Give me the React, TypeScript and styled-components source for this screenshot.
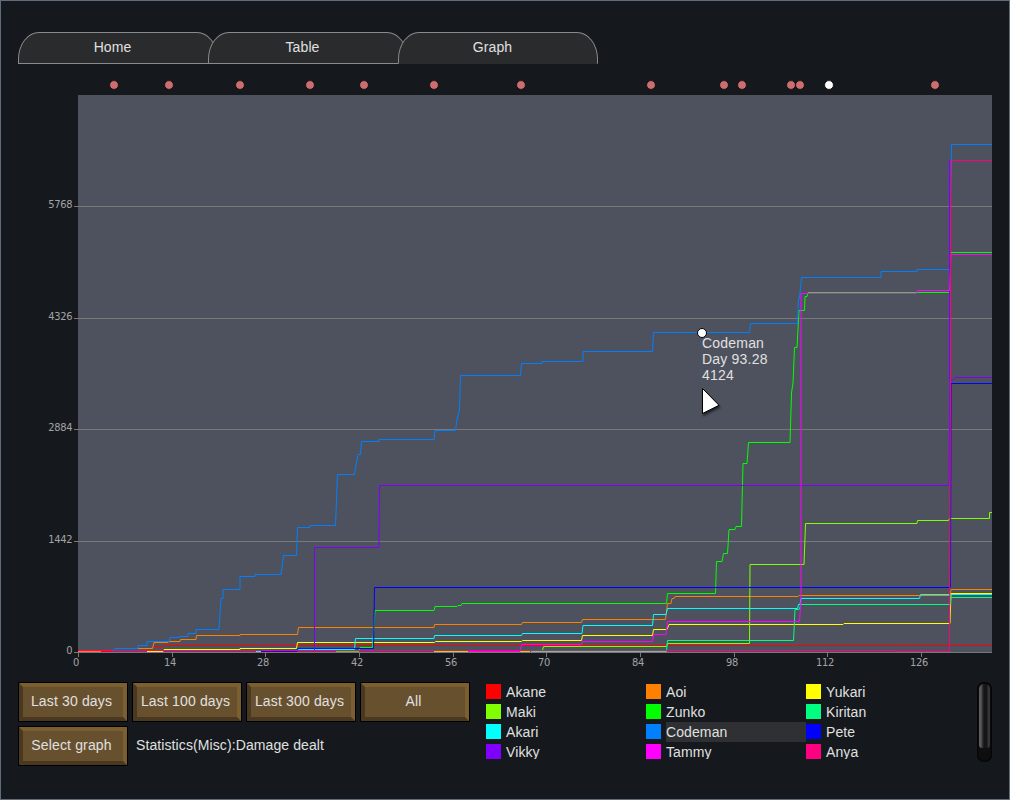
import React from 'react';
import styled, { createGlobalStyle } from 'styled-components';

const colors = {
  window: '#15191d',
  windowBorder: '#616c7a',
  plot: '#4e525e',
  grid: '#797979',
  tab: '#2a2b2c',
  tabBorder: '#898a8b',
  text: '#e0e0e0',
  tick: '#a2a3a5',
  event: '#cd6d70',
  row: '#2e3034',
};

interface Series {
  name: string;
  color: string;
  path: string;
}

// Pawns in drawing order. The paths are in window coordinates.
const series: Series[] = [
  {
    name: 'Akane',
    color: '#ff0000',
    path: 'M101 651.5H112M152 646.5H163L165 645.5H992',
  },
  {
    name: 'Aoi',
    color: '#ff8000',
    path: 'M78 651.5H101M138 648.5H152.5L154 642.5H168V641.5H180L180.5 639.5H196L196.5 635.5H240V634.5H297.5L298.5 627.5H434L434.5 624.5H521.5L522.5 622.5H581.5L582.5 619.5H665.5L667.5 603.5H671L672 598.5H674L675 596.5H798L799 595.5H950L951 589.5H992',
  },
  {
    name: 'Yukari',
    color: '#ffff00',
    path: 'M147 651.5H163L164 649.5H240V648.5H296.5L297.5 642.5H434.5L435.5 641.5H521.5L522.5 640.5H581.5L582.5 635.5H652.5L653.5 629.5H667L669 624.5H843L844 623.5H950L951 593.5H992',
  },
  {
    name: 'Maki',
    color: '#80ff00',
    path: 'M434 651.5H530M542.5 650L543.5 646.5H666.5L667.5 643.5H749.5L750 564.5H804L805.5 523.5H917L917.5 520.5H948.5L949.5 518.5H989.5V512.5H992',
  },
  {
    name: 'Zunko',
    color: '#00ff00',
    path: 'M336 651.5H359L360 647.5H372.5L375 610.5H434L435 606.5H457L458 605.5H461L462 603.5H666.5L667.5 593.5H715.5L716.5 561.5H722L723.5 553.5H727.5L729 529.5H735L736 526.5H741.5L743 463.5H747L748.5 442.5H790L791.5 393L793 383L794.5 347.5H797L799 310.5H804.5L805 296.5H807L808 292.5H949.5L950 252.5H992',
  },
  {
    name: 'Kiritan',
    color: '#00ff80',
    path: 'M531 651.5H666.5L667.5 640.5H793.5L795 609.5H799L801 604.5H950L951 597.5H992',
  },
  {
    name: 'Akari',
    color: '#00ffff',
    path: 'M256 651.5H261M298 649.5H354.5L355.5 638.5H434L434.5 635.5H521.5L522.5 633.5H582L583 625.5H652.5L653.5 614.5H666L667.5 608.5H797.5L798.5 604.5H800L801 598.5H919.5L920.5 594.5H992',
  },
  {
    name: 'Codeman',
    color: '#0080ff',
    path: 'M112 651.5L115 648.5H138V645.5H147V641.5H169L170 637.5H179V636.5H188V633.5H196V629.5H219L221 598.5H223V589.5H240V576.5H255V574.5H281L283.5 555.5H296.5L297.5 527.5H310V525.5H335.5L337.5 474.5H354.5L356 465L358 454.5H360.5L361.5 441.5H379V439.5H434L435 430.5H455.5L457 420L459.5 409L460.5 375.5H520.5L521.5 363.5H542V361.5H583V351.5H652.5L653.5 332.5H749.5L750.5 323.5H797.5L798.5 298.5H799.5L801.5 277.5H881V271.5H917V269.5H949.5L951.5 144.5H992',
  },
  {
    name: 'Pete',
    color: '#0000ff',
    path: 'M261 651.5H297L298 648.5H373.5L374.5 587.5H950.5L951 383.5H992',
  },
  {
    name: 'Vikky',
    color: '#8000ff',
    path: 'M314.5 650V547.5H379L379.5 485.5H949L950 380.5H953L955 377.5H992M949.5 380V160.5',
  },
  {
    name: 'Tammy',
    color: '#ff00ff',
    path: 'M468 651.5H520L521.5 644.5H581.5L582.5 641.5H652.5L653.5 634.5H666L667.5 621.5H799.5L801 600V293.5H916.5L917.5 290.5H949.5L951 254.5H992',
  },
  {
    name: 'Anya',
    color: '#ff0080',
    path: 'M78 650.5H897V651.5H949.5L950.5 370V160.5H992',
  },
];

const xTicks = [
  { label: '0', x: 78.5 },
  { label: '14', x: 172.5 },
  { label: '28', x: 265.5 },
  { label: '42', x: 359.5 },
  { label: '56', x: 453.5 },
  { label: '70', x: 546.5 },
  { label: '84', x: 640.5 },
  { label: '98', x: 734.5 },
  { label: '112', x: 827.5 },
  { label: '126', x: 921.5 },
];

const yTicks = [
  { label: '5768', y: 206.5 },
  { label: '4326', y: 318.5 },
  { label: '2884', y: 429.5 },
  { label: '1442', y: 541.5 },
  { label: '0', y: 652.5 },
];

const events = [114, 169, 240, 310, 364, 434, 521, 651, 724, 742, 791, 800, 829, 935];
const activeEvent = 829;

const ranges = ['Last 30 days', 'Last 100 days', 'Last 300 days', 'All'];

const Chart = () => (
  <Plot viewBox="18 64 974 618">
    <rect x="78" y="95" width="914" height="558" fill={colors.plot} />
    {yTicks.map(({ label, y }) => (
      <g key={label}>
        <path d={`M74 ${y}H992`} stroke={colors.grid} />
        <TickLabel x="72.4" y={y + 1.5} textAnchor="end">
          {label}
        </TickLabel>
      </g>
    ))}
    {xTicks.map(({ label, x }) => (
      <g key={label}>
        <path d={`M${x} 653V657`} stroke={colors.grid} />
        <TickLabel x={x - 2.4} y="666" textAnchor="middle">
          {label}
        </TickLabel>
      </g>
    ))}
    {series.map(({ name, color, path }) => (
      <path key={name} d={path} fill="none" stroke={color} />
    ))}
    {events.map((x) => (
      <circle
        key={x}
        cx={x}
        cy="85"
        r="4.4"
        fill={x === activeEvent ? '#ffffff' : colors.event}
        stroke="#0b0c0e"
        strokeWidth="0.8"
      />
    ))}
    <circle cx="702" cy="333" r="4.5" fill="#ffffff" stroke="#000000" />
    <Tip x="702" y="348">Codeman</Tip>
    <Tip x="702" y="364">Day 93.28</Tip>
    <Tip x="702" y="380">4124</Tip>
    <Cursor d="M702.5 388.5V413.5L719 405.3Z" fill="#ffffff" stroke="#000000" />
  </Plot>
);

// The legend fills row by row, three columns
const legend = ['Akane', 'Aoi', 'Yukari', 'Maki', 'Zunko', 'Kiritan', 'Akari', 'Codeman', 'Pete', 'Vikky', 'Tammy', 'Anya'];

const App = () => (
  <>
    <GlobalStyle />
    <Window>
      <Tabs>
        <Tab>Home</Tab>
        <Tab>Table</Tab>
        <Tab $active>Graph</Tab>
      </Tabs>
      <Chart />
      <Footer>
        <Controls>
          <ButtonRow>
            {ranges.map((range) => (
              <Button key={range}>{range}</Button>
            ))}
          </ButtonRow>
          <ButtonRow>
            <Button>Select graph</Button>
            <GraphName>Statistics(Misc):Damage dealt</GraphName>
          </ButtonRow>
        </Controls>
        <Legend>
          {legend.map((name) => (
            <LegendItem key={name}>
              <Swatch $color={series.find((s) => s.name === name)!.color} />
              <LegendLabel $hovered={name === 'Codeman'}>{name}</LegendLabel>
            </LegendItem>
          ))}
        </Legend>
        <ScrollTrack>
          <ScrollThumb />
        </ScrollTrack>
      </Footer>
    </Window>
  </>
);

export default App;

const GlobalStyle = createGlobalStyle`
  body {
    margin: 0;
    background: ${colors.window};
  }
`;

const Window = styled.div`
  box-sizing: border-box;
  width: 1010px;
  height: 800px;
  padding: 31px 17px;
  border: 1px solid ${colors.windowBorder};
  background: ${colors.window};
  color: ${colors.text};
  font: 14px/20px 'Liberation Sans', Arial, sans-serif;
  letter-spacing: 0.1px;
  white-space: nowrap;
  overflow: hidden;
`;

const Tabs = styled.div`
  display: flex;
`;

const Tab = styled.div<{ $active?: boolean }>`
  box-sizing: border-box;
  width: 200px;
  height: 32px;
  margin-right: -10px;
  padding: 4px 11px 0 0;
  border: 1px solid ${colors.tabBorder};
  border-bottom-color: ${({ $active }) => ($active ? colors.tab : colors.tabBorder)};
  border-radius: 21px 21px 0 0 / 27px 27px 0 0;
  background: ${colors.tab};
  text-align: center;
`;

const Plot = styled.svg`
  display: block;
  width: 974px;
  height: 618px;
`;

const TickLabel = styled.text`
  font: 11px 'DejaVu Sans Condensed', 'DejaVu Sans', sans-serif;
  letter-spacing: -0.25px;
  fill: ${colors.tick};
`;

const Tip = styled.text`
  font: 14px 'Liberation Sans', Arial, sans-serif;
  letter-spacing: 0.2px;
  fill: ${colors.text};
`;

const Cursor = styled.path`
  filter: drop-shadow(1px 2px 1px rgba(0, 0, 0, 0.6));
`;

const Footer = styled.div`
  display: flex;
  align-items: flex-start;
`;

const Controls = styled.div`
  display: flex;
  flex-direction: column;
  gap: 4px;
  width: 468px;
`;

const ButtonRow = styled.div`
  display: flex;
  gap: 4px;
`;

const Button = styled.button`
  box-sizing: border-box;
  width: 110px;
  height: 40px;
  padding: 0 3px 2px 0;
  border: 5px solid;
  border-color: #7c5f31 #7c5f31 #4a3920 #4a3920;
  outline: 1px solid #000000;
  outline-offset: -1px;
  background: #67502e;
  color: ${colors.text};
  font: inherit;
  letter-spacing: 0.15px;
  white-space: nowrap;
`;

const GraphName = styled.span`
  padding: 9px 0 0 4px;
`;

const Legend = styled.div`
  display: grid;
  grid-template-columns: repeat(3, 160px);
  grid-auto-rows: 20px;
  width: 491px;
  height: 77px;
  overflow: hidden;
`;

const LegendItem = styled.div`
  display: flex;
  align-items: center;
`;

const Swatch = styled.div<{ $color: string }>`
  width: 15px;
  height: 15px;
  margin-right: 5px;
  margin-bottom: 1px;
  background: ${({ $color }) => $color};
`;

const LegendLabel = styled.div<{ $hovered: boolean }>`
  flex: 1;
  height: 20px;
  background: ${({ $hovered }) => ($hovered ? colors.row : 'transparent')};
`;

const ScrollTrack = styled.div`
  box-sizing: border-box;
  width: 15px;
  height: 80px;
  padding: 2px;
  border-radius: 7px;
  background: #0c0e0f;
  box-shadow: inset 0 0 1px 1px #050505;
`;

const ScrollThumb = styled.div`
  height: 64px;
  border-radius: 5px 5px 3px 3px;
  background: linear-gradient(90deg, #5a5a5a 0 2px, #3a3a3a 3px, #151515 5px 8px, #343434 9px);
`;
